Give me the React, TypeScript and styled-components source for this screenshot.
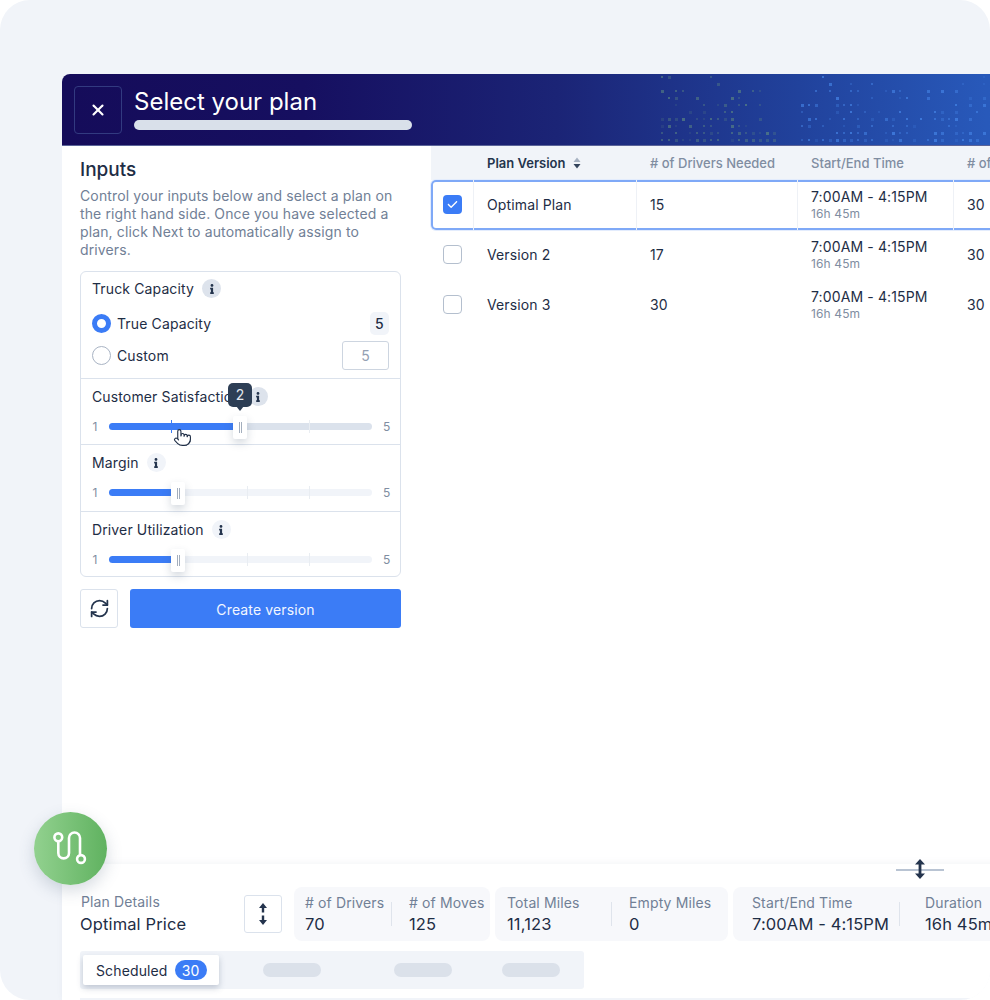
import styled, { createGlobalStyle } from "styled-components";
import { Pointer, RefreshCw, X } from "lucide-react";
import { FaInfo } from "react-icons/fa";
import { FaCheck } from "react-icons/fa6";

const GlobalStyle = createGlobalStyle`
  html, body {
    margin: 0;
    background: #fff;
  }
  * {
    box-sizing: border-box;
  }
`;

const Stage = styled.div`
  position: relative;
  width: 990px;
  height: 1000px;
  padding: 74px 0 0 62px;
  overflow: hidden;
  background: #f1f4f9;
  border-radius: 30px;
  font-family: Inter, "Liberation Sans", sans-serif;
  letter-spacing: 0.13px;
  color: #1e2d45;
`;

const Window = styled.div`
  display: flex;
  flex-direction: column;
  width: 1100px;
  height: 926px;
  background: #fff;
  border-radius: 8px 8px 0 0;
`;

const Header = styled.header`
  position: relative;
  display: flex;
  flex: none;
  align-items: center;
  gap: 12px;
  height: 72px;
  padding: 0 12px;
  overflow: hidden;
  background: linear-gradient(90deg, #150c5a 0%, #160f60 22%, #1b2476 45%, #21429c 67%, #2859ba 84%, #2a5cbe 100%);
  border-bottom: 1px solid #5b6499;
  border-radius: 8px 8px 0 0;
`;

const Dots = styled.svg`
  position: absolute;
  top: 0;
  left: 578px;
`;

const CloseButton = styled.button`
  display: flex;
  flex: none;
  align-items: center;
  justify-content: center;
  width: 48px;
  height: 48px;
  padding: 0;
  color: #fff;
  background: transparent;
  border: 1px solid #323a80;
  border-radius: 4px;
`;

const TitleBlock = styled.div`
  display: flex;
  flex-direction: column;
  gap: 3px;
  margin-top: -2px;
`;

const Title = styled.h1`
  margin: 0;
  font-size: 24px;
  font-weight: 400;
  line-height: 30px;
  letter-spacing: 0;
  color: #fff;
`;

const TitleBar = styled.div`
  width: 278px;
  height: 10px;
  background: #d9e0ea;
  border-radius: 5px;
`;

const Main = styled.div`
  display: flex;
  flex: 1;
  min-height: 0;
`;

const Sidebar = styled.aside`
  flex: none;
  width: 369px;
  padding: 12px 30px 0 18px;
`;

const Heading = styled.h2`
  margin: 0;
  font-size: 19px;
  font-weight: 500;
  line-height: 24px;
  letter-spacing: 0;
`;

const Intro = styled.p`
  margin: 5px 0 12px;
  font-size: 14px;
  line-height: 18px;
  color: #718096;
`;

const Card = styled.div`
  display: flex;
  flex-direction: column;
  width: 321px;
  background: #fff;
  border: 1px solid #dbe2ec;
  border-radius: 6px;
`;

const Section = styled.section<{ $height: number }>`
  height: ${({ $height }) => $height}px;
  padding: 8px 11px 0;
  border-top: 1px solid #dbe2ec;

  &:first-child {
    padding-top: 7px;
    border-top: 0;
  }
`;

const Label = styled.div`
  display: flex;
  align-items: center;
  gap: 8px;
  height: 19px;
  font-size: 14px;
  line-height: 19px;
  white-space: nowrap;
`;

const InfoBadge = styled.span<{ $light?: boolean }>`
  display: inline-flex;
  align-items: center;
  justify-content: center;
  width: 19px;
  height: 19px;
  font-size: 10px;
  color: #24344d;
  background: ${({ $light }) => ($light ? "#f1f4f9" : "#dde3ec")};
  border-radius: 50%;
`;

const OptionRow = styled.div<{ $top: number }>`
  display: flex;
  align-items: center;
  gap: 6px;
  height: 30px;
  margin-top: ${({ $top }) => $top}px;
  font-size: 14px;
`;

const Radio = styled.span<{ $checked?: boolean }>`
  flex: none;
  width: 19px;
  height: 19px;
  background: #fff;
  border: ${({ $checked }) => ($checked ? "5.5px solid #3b7cf6" : "1px solid #a9b4c4")};
  border-radius: 50%;
`;

const OptionName = styled.span`
  flex: 1;
`;

const ValuePill = styled.span`
  display: flex;
  align-items: center;
  justify-content: center;
  width: 19px;
  height: 23px;
  font-weight: 500;
  background: #f1f4f9;
  border-radius: 5px;
`;

const ValueInput = styled.span`
  display: flex;
  align-items: center;
  justify-content: center;
  width: 47px;
  height: 29px;
  color: #94a0b3;
  border: 1px solid #cdd5e0;
  border-radius: 3px;
`;

const SliderRow = styled.div`
  display: flex;
  align-items: center;
  gap: 11px;
  height: 20px;
  margin-top: 10px;
  font-size: 12px;
  color: #808da1;
`;

const SliderEnd = styled.span`
  flex: none;
  width: 6px;
  text-align: center;
`;

const Track = styled.div<{ $strong?: boolean }>`
  position: relative;
  flex: none;
  width: 263px;
  height: 7px;
  background: ${({ $strong }) => ($strong ? "#dbe2ec" : "#f1f4f9")};
  border-radius: 4px;
`;

const Fill = styled.div`
  position: absolute;
  top: 0;
  bottom: 0;
  left: 0;
  background: #3b7cf6;
  border-radius: 4px 0 0 4px;
`;

const Tick = styled.span<{ $blue?: boolean }>`
  position: absolute;
  top: -3px;
  bottom: -3px;
  width: 1px;
  background: ${({ $blue }) => ($blue ? "#3b7cf6" : "#e9edf2")};
`;

const Thumb = styled.span`
  position: absolute;
  top: -7px;
  display: flex;
  gap: 1px;
  align-items: center;
  justify-content: center;
  width: 14px;
  height: 23px;
  margin-left: -7px;
  background: #fff;
  border-radius: 2px;
  box-shadow: 0 4px 8px rgba(60, 80, 110, 0.22);

  &::before,
  &::after {
    width: 1px;
    height: 11px;
    background: #a3aebd;
    content: "";
  }
`;

const SliderTip = styled.span`
  position: absolute;
  top: -40px;
  display: flex;
  align-items: center;
  justify-content: center;
  width: 24px;
  height: 24px;
  margin-left: -12px;
  font-size: 14px;
  color: #e3e8ef;
  background: #2d3e55;
  border-radius: 5px;

  &::after {
    position: absolute;
    bottom: -4px;
    left: 8px;
    border-top: 5px solid #2d3e55;
    border-right: 4px solid transparent;
    border-left: 4px solid transparent;
    content: "";
  }
`;

const HandCursor = styled(Pointer)`
  position: absolute;
  top: 5px;
  left: 64px;
  fill: #fff;
  color: #1e2d45;
`;

const Actions = styled.div`
  display: flex;
  gap: 12px;
  margin-top: 12px;
  width: 321px;
`;

const RefreshButton = styled.button`
  display: flex;
  flex: none;
  align-items: center;
  justify-content: center;
  width: 38px;
  height: 39px;
  padding: 0;
  color: #24344d;
  background: #fff;
  border: 1px solid #dbe2ec;
  border-radius: 3px;
`;

const CreateButton = styled.button`
  flex: 1;
  padding: 1px 0 0;
  font-family: inherit;
  font-size: 14px;
  letter-spacing: 0.13px;
  color: #f2f6ff;
  background: #3b7cf6;
  border: 0;
  border-radius: 3px;
`;

const TableArea = styled.div`
  flex: 1;
  min-width: 0;
`;

const columns = "43px 163px 161px 156px 1fr";

const TableHead = styled.div`
  display: grid;
  grid-template-columns: ${columns};
  align-items: center;
  height: 34px;
  font-size: 13px;
  font-weight: 500;
  letter-spacing: 0;
  color: #808da1;
  background: #f1f4f9;
`;

const HeadCell = styled.div<{ $active?: boolean }>`
  display: flex;
  align-items: center;
  gap: 8px;
  padding-left: 13px;
  color: ${({ $active }) => ($active ? "#24344d" : "#808da1")};
  font-weight: ${({ $active }) => ($active ? 600 : 500)};
  white-space: nowrap;
`;

const Row = styled.div<{ $selected?: boolean }>`
  display: grid;
  grid-template-columns: ${columns};
  height: 50px;
  font-size: 14px;
  border-radius: 5px;
  box-shadow: ${({ $selected }) =>
    $selected ? "inset 0 0 0 2px #7fa9f7, 0 0 0 1px #e3ecfd" : "none"};
`;

const Cell = styled.div<{ $selected?: boolean }>`
  display: flex;
  flex-direction: column;
  justify-content: center;
  padding: 0 0 1px 13px;
  border-right: 1px solid ${({ $selected }) => ($selected ? "#eef1f6" : "transparent")};
`;

const CheckCell = styled(Cell)`
  align-items: flex-start;
  padding-left: 12px;
`;

const Checkbox = styled.span<{ $checked?: boolean }>`
  display: flex;
  align-items: center;
  justify-content: center;
  width: 19px;
  height: 19px;
  font-size: 11px;
  color: #fff;
  background: ${({ $checked }) => ($checked ? "#3b7cf6" : "#fff")};
  border: ${({ $checked }) => ($checked ? "0" : "1px solid #b4bfce")};
  border-radius: 4px;
`;

const TimeText = styled.span`
  line-height: 17px;
`;

const TimeSub = styled.span`
  margin-top: 1px;
  font-size: 12px;
  line-height: 15px;
  color: #808da1;
`;

const DetailPanel = styled.div`
  position: relative;
  flex: none;
  height: 136px;
  padding: 23px 0 0 18px;
  background: #fff;
  box-shadow: 0 -2px 6px rgba(90, 110, 140, 0.06);
`;

const DragHandle = styled.div`
  position: absolute;
  top: -5px;
  left: 834px;
  display: flex;
  align-items: center;
  justify-content: center;
  width: 48px;
  height: 20px;

  &::before {
    position: absolute;
    right: 0;
    left: 0;
    top: 10px;
    height: 2px;
    background: #b9c4d3;
    content: "";
  }
`;

const HandleIcon = styled.svg`
  position: relative;
`;

const DetailRow = styled.div`
  display: flex;
  align-items: center;
  height: 54px;
`;

const PlanName = styled.div`
  display: flex;
  flex: none;
  flex-direction: column;
  gap: 3px;
  width: 164px;
  padding-left: 1px;
`;

const StatLabel = styled.span`
  font-size: 14px;
  line-height: 18px;
  color: #718096;
  white-space: nowrap;
`;

const StatValue = styled.span`
  font-size: 16.5px;
  font-weight: 400;
  line-height: 21px;
  white-space: nowrap;
`;

const PlanValue = styled(StatValue)`
  margin-left: -1px;
`;

const SwapButton = styled.button`
  display: flex;
  flex: none;
  align-items: center;
  justify-content: center;
  width: 38px;
  height: 38px;
  margin-right: 12px;
  padding: 0;
  background: #fff;
  border: 1px solid #dbe2ec;
  border-radius: 3px;
`;

const StatGroup = styled.div<{ $width: number; $pad: number }>`
  display: flex;
  flex: none;
  align-items: center;
  width: ${({ $width }) => $width}px;
  height: 54px;
  margin-right: 5px;
  padding-left: ${({ $pad }) => $pad}px;
  background: #f7f8fb;
  border-radius: 8px;
`;

const Stat = styled.div<{ $width: number }>`
  display: flex;
  flex: none;
  flex-direction: column;
  gap: 2px;
  width: ${({ $width }) => $width}px;
`;

const StatDivider = styled.span<{ $after: number }>`
  flex: none;
  width: 1px;
  height: 24px;
  margin-right: ${({ $after }) => $after}px;
  background: #dfe4ec;
`;

const TabBar = styled.div`
  display: flex;
  align-items: center;
  width: 504px;
  height: 38px;
  margin-top: 10px;
  padding-left: 3px;
  background: #f1f4f9;
  border-radius: 3px;
`;

const ActiveTab = styled.div`
  display: flex;
  flex: none;
  align-items: center;
  gap: 7px;
  width: 136px;
  height: 30px;
  padding-left: 13px;
  font-size: 14px;
  background: #fff;
  border-radius: 2px;
  box-shadow: 0 3px 6px rgba(60, 80, 110, 0.28);
`;

const TabCount = styled.span`
  display: flex;
  align-items: center;
  justify-content: center;
  width: 32px;
  height: 20px;
  color: #fff;
  background: #3b7cf6;
  border-radius: 10px;
`;

const SkeletonTab = styled.span<{ $left: number }>`
  flex: none;
  width: 58px;
  height: 14px;
  margin-left: ${({ $left }) => $left}px;
  background: #dbe1ea;
  border-radius: 7px;
`;

const PanelRule = styled.div`
  height: 3px;
  margin-top: 9px;
  background: #f1f4f9;
`;

const RouteBadge = styled.div`
  position: absolute;
  top: 812px;
  left: 34px;
  width: 73px;
  height: 73px;
  background: linear-gradient(90deg, #92d18f 0%, #60b260 100%);
  border-radius: 50%;
  box-shadow: 0 6px 16px rgba(70, 90, 120, 0.22);
`;

type Option = { name: string; value: string; checked?: boolean };

const options: Option[] = [
  { name: "True Capacity", value: "5", checked: true },
  { name: "Custom", value: "5" },
];

const sliders = [
  { label: "Margin", height: 67 },
  { label: "Driver Utilization", height: 65 },
];

const plans = [
  { name: "Optimal Plan", drivers: "15", selected: true },
  { name: "Version 2", drivers: "17" },
  { name: "Version 3", drivers: "30" },
];

// noisy grid of dots in the header, green on the left and blue on the right
const headerDots = (() => {
  const dots: { x: number; y: number; size: number; color: string; opacity: number }[] = [];
  let seed = 17;
  const next = () => {
    seed = (seed * 16807) % 2147483647;
    return seed / 2147483647;
  };
  for (let col = 0; col < 60; col++) {
    for (let row = 0; row < 10; row++) {
      const x = col * 7;
      const y = row * 7 + 2;
      const green = x > 20 && x < 137;
      const blue = x >= 160;
      if (!green && !blue) continue;
      const chance = (row + 1) / 13;
      if (next() > chance) continue;
      dots.push({
        x,
        y,
        size: next() > 0.6 ? 3 : 2,
        color: green ? "#5f8a80" : "#4a8df0",
        opacity: 0.15 + next() * 0.5,
      });
    }
  }
  return dots;
})();

function Info({ light }: { light?: boolean }) {
  return (
    <InfoBadge $light={light}>
      <FaInfo />
    </InfoBadge>
  );
}

function SortIcon() {
  return (
    <svg width="8" height="12" viewBox="0 0 8 12">
      <path d="M4 0.5 7.5 5H0.5Z" fill="#a6b1c1" />
      <path d="M4 11.5 0.5 7H7.5Z" fill="#33445c" />
    </svg>
  );
}

function RouteIcon() {
  return (
    <svg width="73" height="73" viewBox="0 0 73 73" fill="none" stroke="#fff" strokeWidth="2.6">
      <circle cx="24.3" cy="25.3" r="3.9" />
      <circle cx="47" cy="47" r="3.9" />
      <path d="M24.3 29.2V41a5.35 5.35 0 0 0 10.7 0V26a5.5 5.5 0 0 1 11 0V43" />
    </svg>
  );
}

export default function App() {
  return (
    <Stage>
      <GlobalStyle />
      <Window>
        <Header>
          <Dots width="440" height="72">
            {headerDots.map((dot, i) => (
              <rect
                key={i}
                x={dot.x}
                y={dot.y}
                width={dot.size}
                height={dot.size}
                fill={dot.color}
                opacity={dot.opacity}
              />
            ))}
          </Dots>
          <CloseButton>
            <X size={18} strokeWidth={2.8} />
          </CloseButton>
          <TitleBlock>
            <Title>Select your plan</Title>
            <TitleBar />
          </TitleBlock>
        </Header>
        <Main>
          <Sidebar>
            <Heading>Inputs</Heading>
            <Intro>
              Control your inputs below and select a plan on the right hand side. Once you have
              selected a plan, click Next to automatically assign to drivers.
            </Intro>
            <Card>
              <Section $height={106}>
                <Label>
                  Truck Capacity
                  <Info />
                </Label>
                {options.map((option, i) => (
                  <OptionRow key={option.name} $top={i === 0 ? 10 : 2}>
                    <Radio $checked={option.checked} />
                    <OptionName>{option.name}</OptionName>
                    {option.checked ? (
                      <ValuePill>{option.value}</ValuePill>
                    ) : (
                      <ValueInput>{option.value}</ValueInput>
                    )}
                  </OptionRow>
                ))}
              </Section>
              <Section $height={66}>
                <Label>
                  Customer Satisfaction
                  <Info />
                </Label>
                <SliderRow>
                  <SliderEnd>1</SliderEnd>
                  <Track $strong>
                    <Fill style={{ width: 131 }} />
                    <Tick $blue style={{ left: 62 }} />
                    <Tick style={{ left: 200 }} />
                    <Thumb style={{ left: 131 }} />
                    <SliderTip style={{ left: 131 }}>2</SliderTip>
                    <HandCursor size={19} strokeWidth={1.4} />
                  </Track>
                  <SliderEnd>5</SliderEnd>
                </SliderRow>
              </Section>
              {sliders.map((slider) => (
                <Section key={slider.label} $height={slider.height}>
                  <Label>
                    {slider.label}
                    <Info light />
                  </Label>
                  <SliderRow>
                    <SliderEnd>1</SliderEnd>
                    <Track>
                      <Fill style={{ width: 69 }} />
                      <Tick style={{ left: 138 }} />
                      <Tick style={{ left: 200 }} />
                      <Thumb style={{ left: 69 }} />
                    </Track>
                    <SliderEnd>5</SliderEnd>
                  </SliderRow>
                </Section>
              ))}
            </Card>
            <Actions>
              <RefreshButton>
                <RefreshCw size={21} strokeWidth={2} />
              </RefreshButton>
              <CreateButton>Create version</CreateButton>
            </Actions>
          </Sidebar>
          <TableArea>
            <TableHead>
              <HeadCell />
              <HeadCell $active>
                Plan Version
                <SortIcon />
              </HeadCell>
              <HeadCell># of Drivers Needed</HeadCell>
              <HeadCell>Start/End Time</HeadCell>
              <HeadCell># of Moves</HeadCell>
            </TableHead>
            {plans.map((plan) => (
              <Row key={plan.name} $selected={plan.selected}>
                <CheckCell $selected={plan.selected}>
                  <Checkbox $checked={plan.selected}>{plan.selected && <FaCheck />}</Checkbox>
                </CheckCell>
                <Cell $selected={plan.selected}>{plan.name}</Cell>
                <Cell $selected={plan.selected}>{plan.drivers}</Cell>
                <Cell $selected={plan.selected}>
                  <TimeText>7:00AM - 4:15PM</TimeText>
                  <TimeSub>16h 45m</TimeSub>
                </Cell>
                <Cell>30</Cell>
              </Row>
            ))}
          </TableArea>
        </Main>
        <DetailPanel>
          <DragHandle>
            <HandleIcon width="12" height="20" viewBox="0 0 12 20" fill="#24344d">
              <path d="M6 0 11 5.5H7.4V14.5H11L6 20 1 14.5H4.6V5.5H1Z" />
            </HandleIcon>
          </DragHandle>
          <DetailRow>
            <PlanName>
              <StatLabel>Plan Details</StatLabel>
              <PlanValue>Optimal Price</PlanValue>
            </PlanName>
            <SwapButton>
              <svg width="10" height="22" viewBox="0 0 10 22" fill="#24344d">
                <path d="M5 0 9 5H6.2V9.5H3.8V5H1Z" />
                <path d="M5 22 1 17H3.8V12.5H6.2V17H9Z" />
              </svg>
            </SwapButton>
            <StatGroup $width={196} $pad={11}>
              <Stat $width={86}>
                <StatLabel># of Drivers</StatLabel>
                <StatValue>70</StatValue>
              </Stat>
              <StatDivider $after={17} />
              <Stat $width={74}>
                <StatLabel># of Moves</StatLabel>
                <StatValue>125</StatValue>
              </Stat>
            </StatGroup>
            <StatGroup $width={233} $pad={12}>
              <Stat $width={104}>
                <StatLabel>Total Miles</StatLabel>
                <StatValue>11,123</StatValue>
              </Stat>
              <StatDivider $after={17} />
              <Stat $width={82}>
                <StatLabel>Empty Miles</StatLabel>
                <StatValue>0</StatValue>
              </Stat>
            </StatGroup>
            <StatGroup $width={320} $pad={19}>
              <Stat $width={147}>
                <StatLabel>Start/End Time</StatLabel>
                <StatValue>7:00AM - 4:15PM</StatValue>
              </Stat>
              <StatDivider $after={25} />
              <Stat $width={90}>
                <StatLabel>Duration</StatLabel>
                <StatValue>16h 45m</StatValue>
              </Stat>
            </StatGroup>
          </DetailRow>
          <TabBar>
            <ActiveTab>
              Scheduled
              <TabCount>30</TabCount>
            </ActiveTab>
            <SkeletonTab $left={44} />
            <SkeletonTab $left={73} />
            <SkeletonTab $left={50} />
          </TabBar>
          <PanelRule />
        </DetailPanel>
      </Window>
      <RouteBadge>
        <RouteIcon />
      </RouteBadge>
    </Stage>
  );
}
